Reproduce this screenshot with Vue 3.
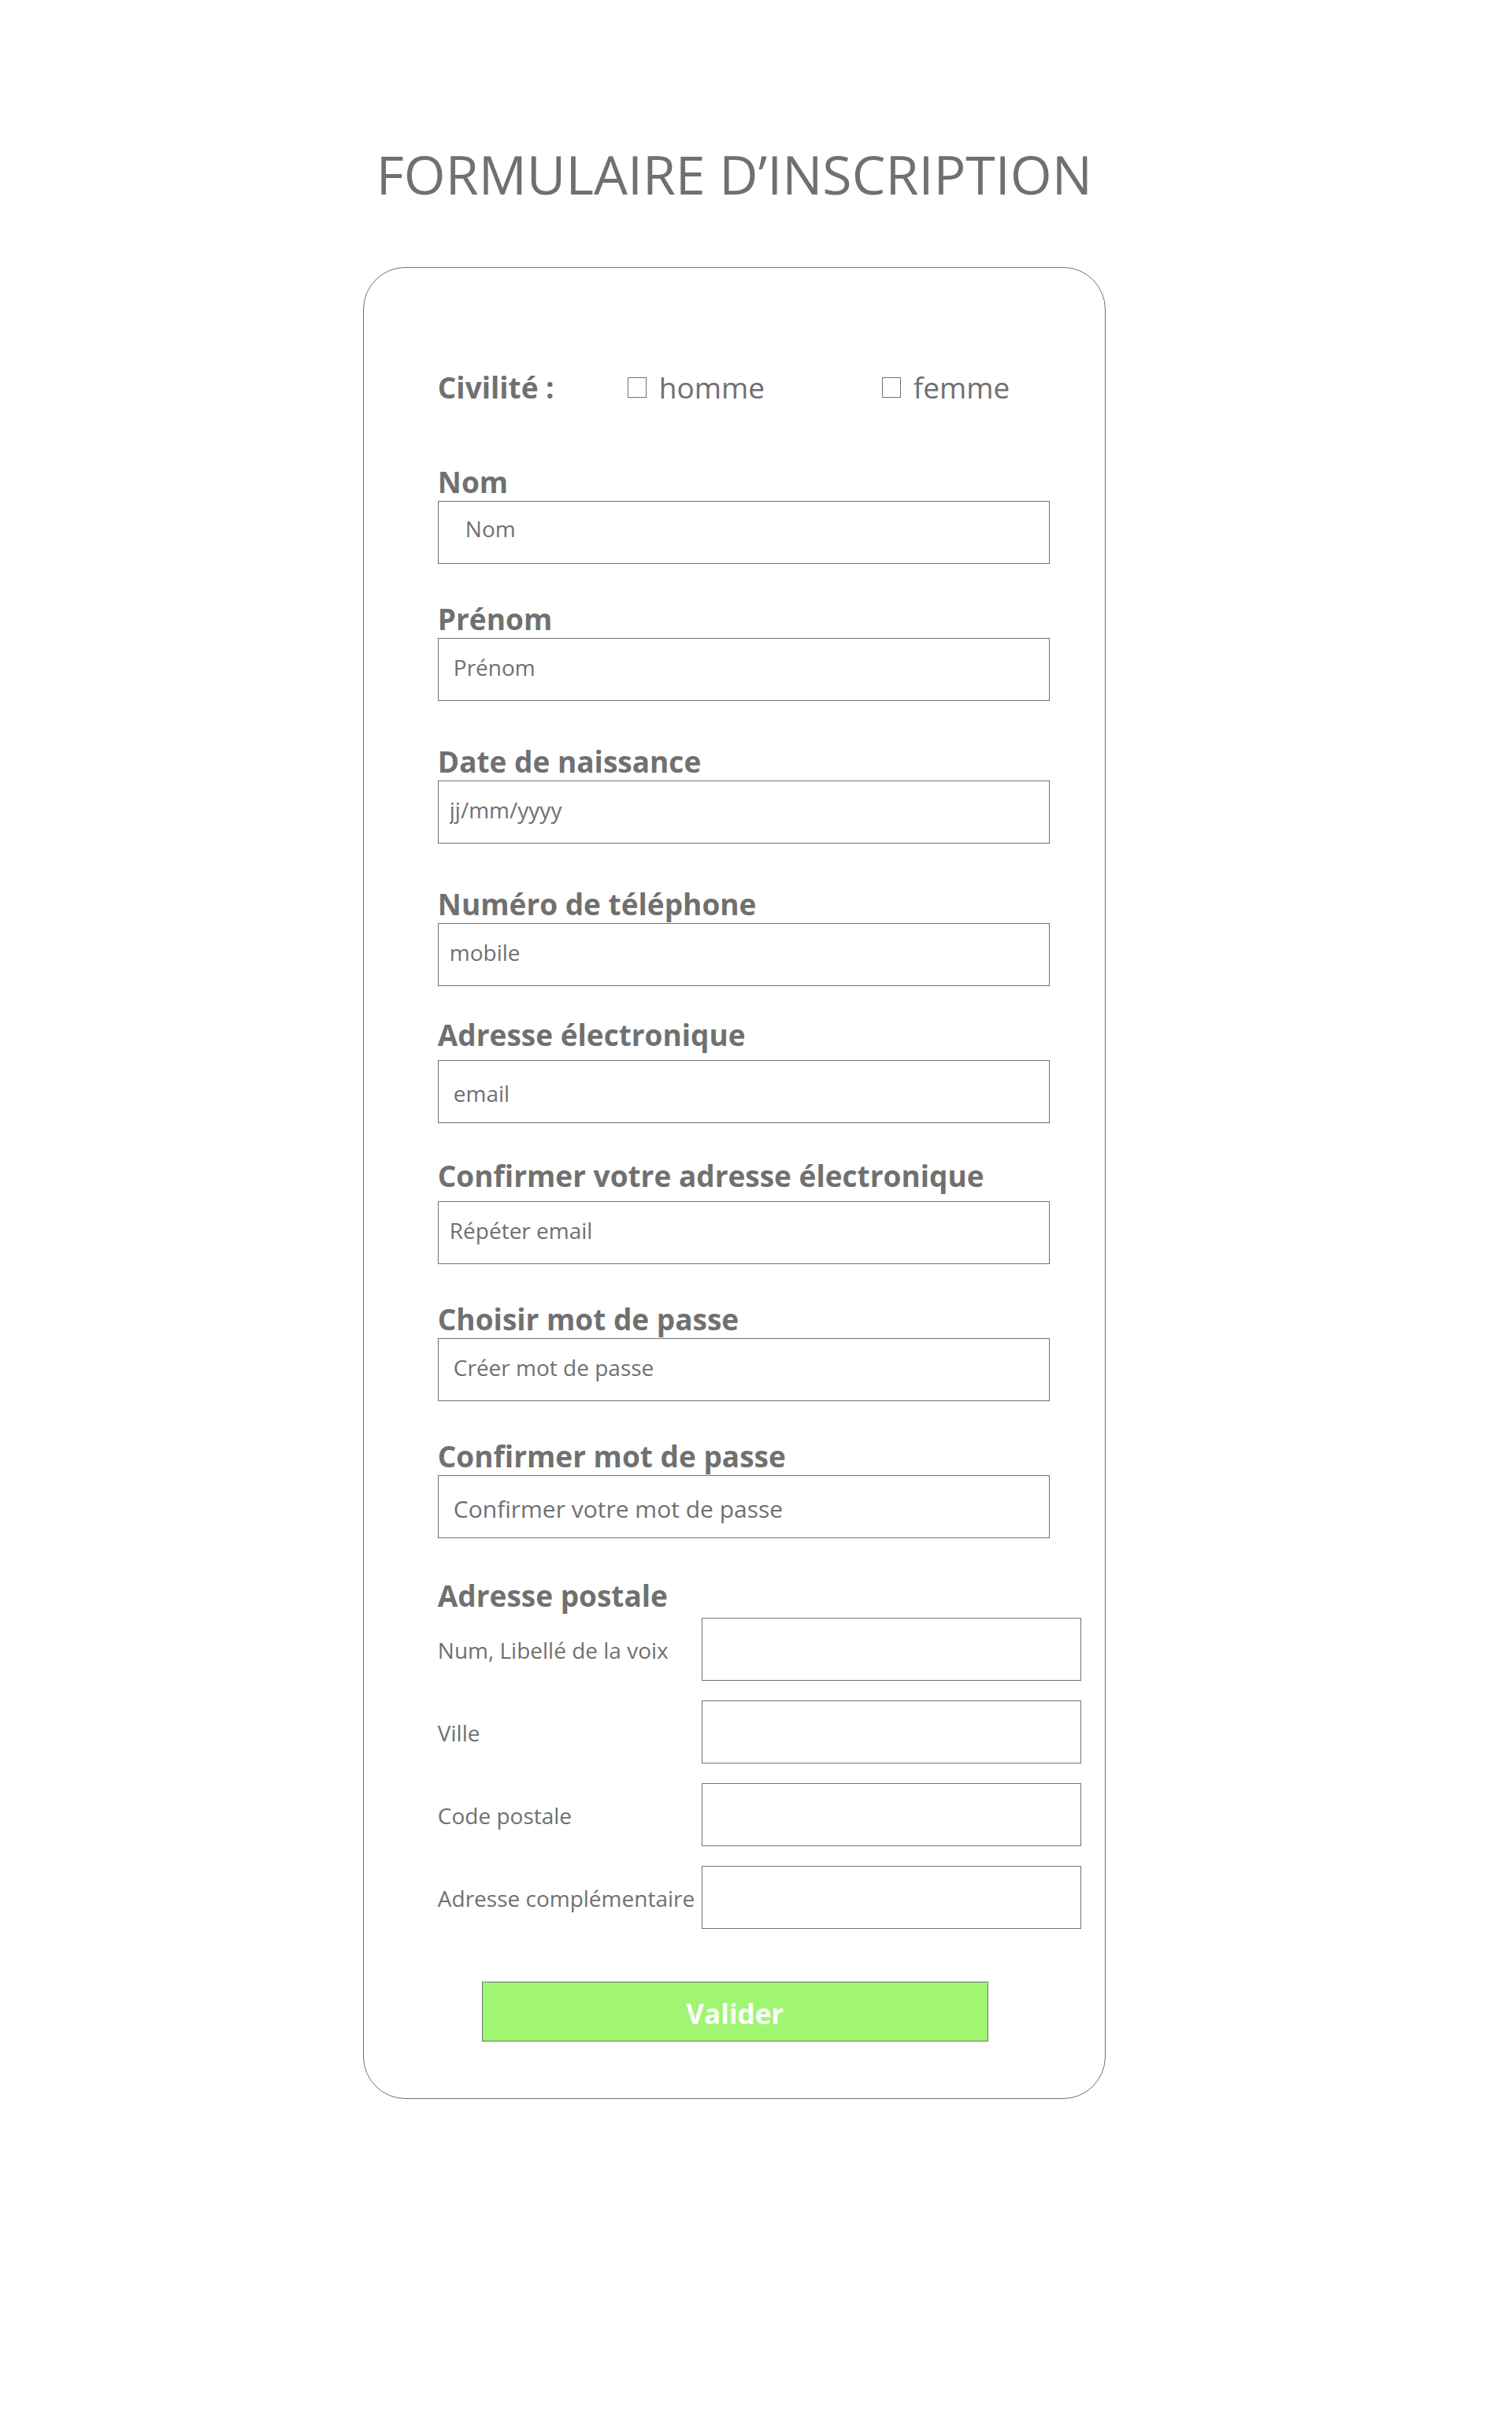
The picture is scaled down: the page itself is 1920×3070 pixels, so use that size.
<script setup>
import { reactive } from 'vue'

const form = reactive({
  homme: false,
  femme: false,
  nom: '',
  prenom: '',
  naissance: '',
  telephone: '',
  email: '',
  emailConfirmation: '',
  motDePasse: '',
  motDePasseConfirmation: '',
  voie: '',
  ville: '',
  codePostal: '',
  complement: ''
})

const fields = [
  { id: 'nom', label: 'Nom', placeholder: 'Nom', type: 'text', mods: ['field--indented'] },
  { id: 'prenom', label: 'Prénom', placeholder: 'Prénom', type: 'text', mods: [] },
  { id: 'naissance', label: 'Date de naissance', placeholder: 'jj/mm/yyyy', type: 'text', mods: ['field--spaced', 'field--tight'] },
  { id: 'telephone', label: 'Numéro de téléphone', placeholder: 'mobile', type: 'tel', mods: ['field--spaced', 'field--tight'] },
  { id: 'email', label: 'Adresse électronique', placeholder: 'email', type: 'email', mods: ['field--email', 'field--low'] },
  { id: 'emailConfirmation', label: 'Confirmer votre adresse électronique', placeholder: 'Répéter email', type: 'email', mods: ['field--email-repeat', 'field--tight'] },
  { id: 'motDePasse', label: 'Choisir mot de passe', placeholder: 'Créer mot de passe', type: 'password', mods: [] },
  { id: 'motDePasseConfirmation', label: 'Confirmer mot de passe', placeholder: 'Confirmer votre mot de passe', type: 'password', mods: ['field--low', 'field--large'] }
]

const addressRows = [
  { id: 'voie', label: 'Num, Libellé de la voix' },
  { id: 'ville', label: 'Ville' },
  { id: 'codePostal', label: 'Code postale' },
  { id: 'complement', label: 'Adresse complémentaire' }
]
</script>

<template>
  <main class="page">
    <div class="column">
      <h1 class="title">FORMULAIRE D’INSCRIPTION</h1>
      <form class="card" @submit.prevent>
        <div class="civility" role="group" aria-labelledby="civility-label">
          <span id="civility-label" class="heading">Civilité :</span>
          <label class="choice"><input v-model="form.homme" class="box" type="checkbox" />homme</label>
          <label class="choice"><input v-model="form.femme" class="box" type="checkbox" />femme</label>
        </div>

        <div v-for="f in fields" :key="f.id" class="field" :class="f.mods">
          <label class="heading" :for="f.id">{{ f.label }}</label>
          <input :id="f.id" v-model="form[f.id]" class="input" :type="f.type" :placeholder="f.placeholder" />
        </div>

        <fieldset class="address">
          <legend class="heading address-title">Adresse postale</legend>
          <div v-for="r in addressRows" :key="r.id" class="row">
            <label class="row-label" :for="r.id">{{ r.label }}</label>
            <input :id="r.id" v-model="form[r.id]" class="input" type="text" />
          </div>
        </fieldset>

        <button class="submit" type="submit">Valider</button>
      </form>
    </div>
  </main>
</template>

<style>
body {
  background: #ffffff;
}
</style>

<style scoped>
.page {
  box-sizing: border-box;
  padding: 173px 24px 405px 24%;
  color: #707070;
  font-family: "Open Sans", "Noto Sans", sans-serif;
}

.column {
  max-width: 943px;
}

.title {
  margin: 0 0 70px;
  font-size: 68px;
  font-weight: 400;
  line-height: 96px;
  text-align: center;
}

.card {
  box-sizing: border-box;
  display: flex;
  flex-direction: column;
  padding: 128px 30px 72px 94px;
  border: 1px solid #707070;
  border-radius: 54px;
}

.heading {
  font-size: 37px;
  font-weight: 700;
  line-height: 48px;
}

.civility {
  display: grid;
  grid-template-columns: 241px 323px auto;
  margin-bottom: 72px;
}

.choice {
  display: flex;
  align-items: center;
  gap: 16px;
  font-size: 37px;
  line-height: 48px;
}

.box {
  appearance: none;
  box-sizing: border-box;
  width: 24px;
  height: 26px;
  margin: 0;
  border: 1px solid #707070;
  background: #ffffff;
}

.box:checked {
  background: #a0f571;
}

.field {
  display: flex;
  flex-direction: column;
  margin-right: 40px;
}

.field + .field {
  margin-top: 46px;
}

.input {
  box-sizing: border-box;
  width: 100%;
  height: 80px;
  padding: 0 19px 6px;
  border: 1px solid #707070;
  border-radius: 0;
  background: #ffffff;
  color: #707070;
  font-family: inherit;
  font-size: 28px;
}

.input::placeholder {
  color: #707070;
  opacity: 1;
}

.field + .field--spaced {
  margin-top: 53px;
}

.field + .field--email {
  margin-top: 38px;
}

.field + .field--email-repeat {
  margin-top: 43px;
}

.field--email,
.field--email-repeat {
  gap: 8px;
}

.field--indented .input {
  padding-bottom: 10px;
  padding-left: 34px;
}

.field--tight .input {
  padding-left: 14px;
}

.field--low .input {
  padding-top: 4px;
  padding-bottom: 0;
}

.field--large .input {
  font-size: 30px;
}

.address {
  display: flex;
  flex-direction: column;
  gap: 25px;
  min-width: 0;
  margin: 49px 0 0;
  padding: 0;
  border: 0;
}

.address-title {
  padding: 0 0 4px;
}

.row {
  display: grid;
  grid-template-columns: 335px 1fr;
  align-items: center;
}

.row-label {
  padding-top: 2px;
  font-size: 28px;
  line-height: 40px;
  white-space: nowrap;
}

.submit {
  align-self: center;
  box-sizing: border-box;
  width: 100%;
  max-width: 643px;
  height: 76px;
  margin: 67px 62px 0 0;
  padding: 4px 0 0;
  border: 1px solid #707070;
  border-radius: 0;
  background: #a0f571;
  color: #ffffff;
  font-family: inherit;
  font-size: 35px;
  font-weight: 700;
}
</style>
